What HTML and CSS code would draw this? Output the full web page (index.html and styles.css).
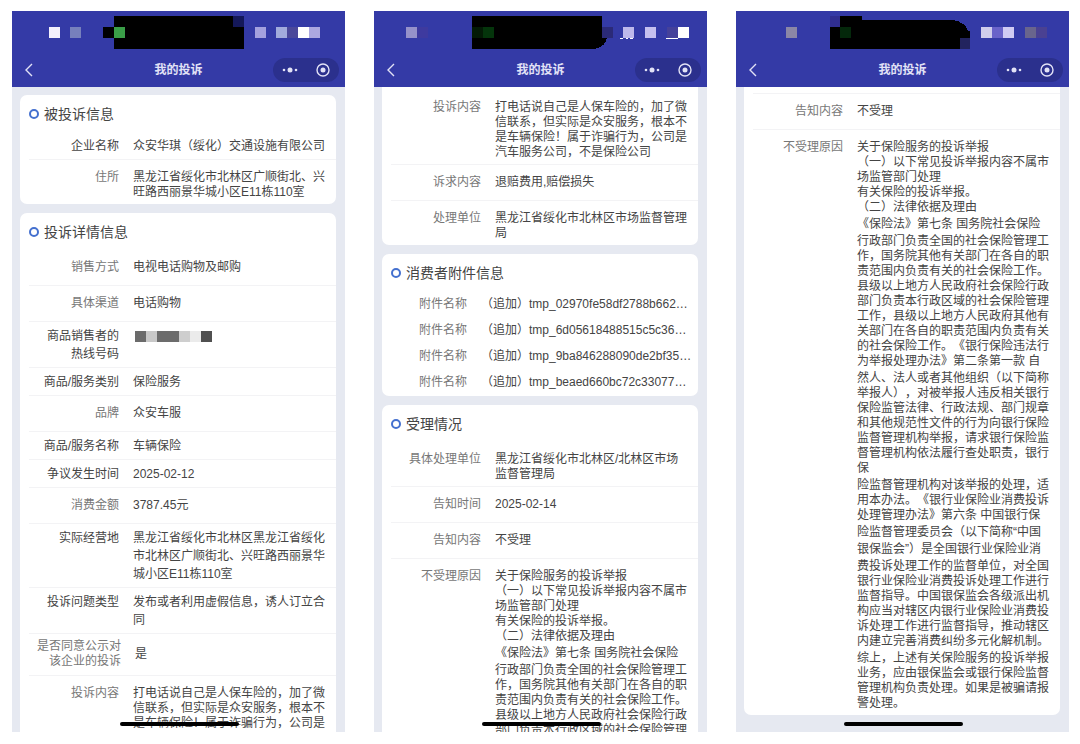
FILE: index.html
```html
<!DOCTYPE html>
<html lang="zh-CN">
<head>
    <meta charset="UTF-8">
    <meta name="viewport" content="width=device-width, initial-scale=1.0">
    <title>我的投诉</title>
    <link rel="stylesheet" href="styles.css">
</head>
<body>
    <!-- Screen 1 -->
    <section class="phone">
        <header class="top-bar">
            <svg class="status" viewBox="0 0 333 38" shape-rendering="crispEdges" aria-hidden="true">
                <rect x="37" y="16" width="11" height="11" fill="#f3f0fc"/>
                <rect x="58" y="16" width="11" height="11" fill="#7780bc"/>
                <rect x="91" y="16" width="11" height="11" fill="#000"/>
                <rect x="102" y="5" width="130" height="33" fill="#000"/>
                <rect x="221" y="5" width="11" height="11" fill="#14185a"/>
                <rect x="102" y="16" width="11" height="11" fill="#3a9e48"/>
                <rect x="243" y="16" width="11" height="11" fill="#a4a1de"/>
                <rect x="264" y="16" width="11" height="11" fill="#a2abdc"/>
                <rect x="275" y="16" width="11" height="11" fill="#4b489a"/>
                <rect x="286" y="16" width="11" height="11" fill="#fff"/>
                <rect x="297" y="16" width="11" height="11" fill="#aca8e0"/>
            </svg>
            <div class="nav">
                <button class="back" type="button" aria-label="返回">
                    <svg viewBox="0 0 10 14"><path d="M8 1 2 7l6 6"/></svg>
                </button>
                <h1>我的投诉</h1>
                <div class="capsule">
                    <button type="button" aria-label="更多">
                        <svg viewBox="0 0 16 14"><circle cx="2" cy="7" r="1.3"/><circle cx="8" cy="7" r="2.5"/><circle cx="14" cy="7" r="1.3"/></svg>
                    </button>
                    <button type="button" aria-label="关闭">
                        <svg viewBox="0 0 14 14"><circle class="ring" cx="7" cy="7" r="6"/><circle cx="7" cy="7" r="2.5"/></svg>
                    </button>
                </div>
            </div>
        </header>
        <main class="content">
            <article class="card">
                <h2>被投诉信息</h2>
                <dl>
                    <div class="row compact"><dt>企业名称</dt><dd>众安华琪（绥化）交通设施有限公司</dd></div>
                    <div class="row"><dt>住所</dt><dd>黑龙江省绥化市北林区广顺街北、兴旺路西丽景华城小区E11栋110室</dd></div>
                </dl>
            </article>
            <article class="card">
                <h2>投诉详情信息</h2>
                <dl>
                    <div class="row"><dt>销售方式</dt><dd>电视电话购物及邮购</dd></div>
                    <div class="row"><dt>具体渠道</dt><dd>电话购物</dd></div>
                    <div class="row compact">
                        <dt>商品销售者的<br>热线号码</dt>
                        <dd>
                            <svg class="masked" viewBox="0 0 77 11" shape-rendering="crispEdges" aria-hidden="true">
                                <rect width="11" height="11" fill="#6b6b6b"/>
                                <rect x="11" width="11" height="11" fill="#c8c8c8"/>
                                <rect x="22" width="22" height="11" fill="#6c6c6c"/>
                                <rect x="44" width="11" height="11" fill="#cecece"/>
                                <rect x="55" width="11" height="11" fill="#ebebeb"/>
                                <rect x="66" width="11" height="11" fill="#505050"/>
                            </svg>
                        </dd>
                    </div>
                    <div class="row compact"><dt>商品/服务类别</dt><dd>保险服务</dd></div>
                    <div class="row"><dt>品牌</dt><dd>众安车服</dd></div>
                    <div class="row compact"><dt>商品/服务名称</dt><dd>车辆保险</dd></div>
                    <div class="row compact"><dt>争议发生时间</dt><dd>2025-02-12</dd></div>
                    <div class="row"><dt>消费金额</dt><dd>3787.45元</dd></div>
                    <div class="row compact"><dt>实际经营地</dt><dd>黑龙江省绥化市北林区黑龙江省绥化市北林区广顺街北、兴旺路西丽景华城小区E11栋110室</dd></div>
                    <div class="row compact"><dt>投诉问题类型</dt><dd>发布或者利用虚假信息，诱人订立合同</dd></div>
                    <div class="row consent"><dt>是否同意公示对该企业的投诉</dt><dd>是</dd></div>
                    <div class="row"><dt>投诉内容</dt><dd>打电话说自己是人保车险的，加了微信联系，但实际是众安服务，根本不是车辆保险！属于诈骗行为，公司是</dd></div>
                    <div class="row"></div>
                </dl>
            </article>
        </main>
        <div class="home-bar"></div>
    </section>

    <!-- Screen 2 -->
    <section class="phone">
        <header class="top-bar">
            <svg class="status" viewBox="0 0 333 38" shape-rendering="crispEdges" aria-hidden="true">
                <rect x="32" y="16" width="11" height="11" fill="#9692ca"/>
                <rect x="43" y="16" width="11" height="11" fill="#3e3a9f"/>
                <path d="M98 5h130v22h5q-3 11-16 11H98z" fill="#000"/>
                <rect x="98" y="16" width="11" height="11" fill="#031a05"/>
                <rect x="109" y="16" width="11" height="11" fill="#04350b"/>
                <rect x="228" y="16" width="11" height="11" fill="#2b2a78"/>
                <rect x="249" y="16" width="11" height="11" fill="#beb9eb"/>
                <path d="M246 27h3v1h-3zM252 27h2v1h-2zM256 27h3v1h-3z" fill="#fff"/>
                <rect x="271" y="16" width="11" height="11" fill="#c5c0ef"/>
                <rect x="293" y="16" width="11" height="11" fill="#45419a"/>
                <rect x="304" y="16" width="11" height="11" fill="#fff"/>
                <rect x="292" y="27" width="12" height="1" fill="#fff"/>
            </svg>
            <div class="nav">
                <button class="back" type="button" aria-label="返回">
                    <svg viewBox="0 0 10 14"><path d="M8 1 2 7l6 6"/></svg>
                </button>
                <h1>我的投诉</h1>
                <div class="capsule">
                    <button type="button" aria-label="更多">
                        <svg viewBox="0 0 16 14"><circle cx="2" cy="7" r="1.3"/><circle cx="8" cy="7" r="2.5"/><circle cx="14" cy="7" r="1.3"/></svg>
                    </button>
                    <button type="button" aria-label="关闭">
                        <svg viewBox="0 0 14 14"><circle class="ring" cx="7" cy="7" r="6"/><circle cx="7" cy="7" r="2.5"/></svg>
                    </button>
                </div>
            </div>
        </header>
        <main class="content scrolled">
            <article class="card cut">
                <dl>
                    <div class="row"><dt>投诉内容</dt><dd>打电话说自己是人保车险的，加了微信联系，但实际是众安服务，根本不是车辆保险！属于诈骗行为，公司是汽车服务公司，不是保险公司</dd></div>
                    <div class="row"><dt>诉求内容</dt><dd>退赔费用,赔偿损失</dd></div>
                    <div class="row"><dt>处理单位</dt><dd>黑龙江省绥化市北林区市场监督管理局</dd></div>
                </dl>
            </article>
            <article class="card">
                <h2>消费者附件信息</h2>
                <dl class="files">
                    <div class="file"><dt>附件名称</dt><dd>（追加）tmp_02970fe58df2788b662…</dd></div>
                    <div class="file"><dt>附件名称</dt><dd>（追加）tmp_6d05618488515c5c36…</dd></div>
                    <div class="file"><dt>附件名称</dt><dd>（追加）tmp_9ba846288090de2bf35…</dd></div>
                    <div class="file"><dt>附件名称</dt><dd>（追加）tmp_beaed660bc72c33077…</dd></div>
                </dl>
            </article>
            <article class="card">
                <h2>受理情况</h2>
                <dl>
                    <div class="row"><dt>具体处理单位</dt><dd>黑龙江省绥化市北林区/北林区市场监督管理局</dd></div>
                    <div class="row"><dt>告知时间</dt><dd>2025-02-14</dd></div>
                    <div class="row"><dt>告知内容</dt><dd>不受理</dd></div>
                    <div class="row">
                        <dt>不受理原因</dt>
                        <dd>
                            <p>关于保险服务的投诉举报<br>（一）以下常见投诉举报内容不属市场监管部门处理<br>有关保险的投诉举报。<br>（二）法律依据及理由</p>
                            <p>《保险法》第七条 国务院社会保险</p>
                            <p>行政部门负责全国的社会保险管理工作，国务院其他有关部门在各自的职责范围内负责有关的社会保险工作。县级以上地方人民政府社会保险行政部门负责本行政区域的社会保险管理</p>
                        </dd>
                    </div>
                </dl>
            </article>
        </main>
        <div class="home-bar"></div>
    </section>

    <!-- Screen 3 -->
    <section class="phone">
        <header class="top-bar">
            <svg class="status" viewBox="0 0 333 38" shape-rendering="crispEdges" aria-hidden="true">
                <rect x="50" y="16" width="11" height="11" fill="#8b87a6"/>
                <rect x="94" y="5" width="10" height="11" fill="#302e90"/>
                <path d="M104 5h22v4h91q12 2 15 11l2 0v18H94V16h10z" fill="#000"/>
                <rect x="104" y="16" width="11" height="11" fill="#04280b"/>
                <rect x="224" y="27" width="10" height="11" fill="#22235e"/>
                <rect x="245" y="16" width="11" height="11" fill="#d0cdeb"/>
                <rect x="256" y="16" width="11" height="11" fill="#6a63c9"/>
                <rect x="267" y="16" width="11" height="11" fill="#d0cbf3"/>
                <rect x="289" y="16" width="11" height="11" fill="#69658d"/>
                <rect x="300" y="16" width="11" height="11" fill="#4a4192"/>
            </svg>
            <div class="nav">
                <button class="back" type="button" aria-label="返回">
                    <svg viewBox="0 0 10 14"><path d="M8 1 2 7l6 6"/></svg>
                </button>
                <h1>我的投诉</h1>
                <div class="capsule">
                    <button type="button" aria-label="更多">
                        <svg viewBox="0 0 16 14"><circle cx="2" cy="7" r="1.3"/><circle cx="8" cy="7" r="2.5"/><circle cx="14" cy="7" r="1.3"/></svg>
                    </button>
                    <button type="button" aria-label="关闭">
                        <svg viewBox="0 0 14 14"><circle class="ring" cx="7" cy="7" r="6"/><circle cx="7" cy="7" r="2.5"/></svg>
                    </button>
                </div>
            </div>
        </header>
        <main class="content scrolled">
            <article class="card cut">
                <div class="row-rest"></div>
                <dl>
                    <div class="row"><dt>告知内容</dt><dd>不受理</dd></div>
                    <div class="row">
                        <dt>不受理原因</dt>
                        <dd>
                            <p>关于保险服务的投诉举报<br>（一）以下常见投诉举报内容不属市场监管部门处理<br>有关保险的投诉举报。<br>（二）法律依据及理由</p>
                            <p>《保险法》第七条 国务院社会保险</p>
                            <p>行政部门负责全国的社会保险管理工作，国务院其他有关部门在各自的职责范围内负责有关的社会保险工作。县级以上地方人民政府社会保险行政部门负责本行政区域的社会保险管理工作，县级以上地方人民政府其他有关部门在各自的职责范围内负责有关的社会保险工作。《银行保险违法行为举报处理办法》第二条第一款 自</p>
                            <p>然人、法人或者其他组织（以下简称举报人），对被举报人违反相关银行保险监管法律、行政法规、部门规章和其他规范性文件的行为向银行保险监督管理机构举报，请求银行保险监督管理机构依法履行查处职责，银行保</p>
                            <p>险监督管理机构对该举报的处理，适用本办法。《银行业保险业消费投诉处理管理办法》第六条 中国银行保</p>
                            <p>险监督管理委员会（以下简称“中国</p>
                            <p>银保监会”）是全国银行业保险业消</p>
                            <p>费投诉处理工作的监督单位，对全国银行业保险业消费投诉处理工作进行监督指导。中国银保监会各级派出机构应当对辖区内银行业保险业消费投诉处理工作进行监督指导，推动辖区内建立完善消费纠纷多元化解机制。</p>
                            <p>综上，上述有关保险服务的投诉举报业务，应由银保监会或银行保险监督管理机构负责处理。如果是被骗请报警处理。</p>
                        </dd>
                    </div>
                </dl>
            </article>
        </main>
        <div class="home-bar"></div>
    </section>
</body>
</html>
```

FILE: styles.css
```css
* {
    margin: 0;
    padding: 0;
    box-sizing: border-box;
}

body {
    font-family: "Liberation Sans", "Noto Sans CJK SC", sans-serif;
    font-size: 12px;
    line-height: 15px;
    color: #444;
    background: #fff;
    height: 100vh;
    padding: 11px 11px 12px 12px;
    display: grid;
    grid-template-columns: repeat(3, minmax(0, 1fr));
    gap: 29px;
    text-spacing-trim: space-all;
}

.phone {
    position: relative;
    min-height: 0;
    overflow: hidden;
    background: #e6e9f1;
}

/* Header */
.top-bar {
    background: #343aa6;
    padding-bottom: 5px;
}

.status {
    display: block;
    width: 100%;
    margin-bottom: 9px;
}

.nav {
    display: grid;
    grid-template-columns: 1fr auto 1fr;
    align-items: center;
    height: 24px;
    padding: 0 6px 0 12px;
    color: #e2e2f6;
}

.nav h1 {
    font-size: 12px;
    line-height: 18px;
    font-weight: 700;
    padding-right: 6px;
}

.nav button {
    display: flex;
    align-items: center;
    border: none;
    background: none;
    color: inherit;
    cursor: pointer;
}

.nav svg {
    height: 14px;
    fill: currentColor;
}

.back path,
.nav .ring {
    fill: none;
    stroke: currentColor;
    stroke-width: 1.4;
}

.capsule {
    justify-self: end;
    display: flex;
    align-items: center;
    justify-content: space-between;
    width: 66px;
    height: 24px;
    padding: 0 9px;
    border-radius: 12px;
    background: #2b308d;
}

/* Cards */
.content {
    display: flex;
    flex-direction: column;
    gap: 9px;
    padding: 8px 9px 0 8px;
}

.content.scrolled {
    padding-top: 0;
}

.card {
    background: #fff;
    border-radius: 7px;
    padding-left: 9px;
}

.card.cut {
    border-radius: 0 0 7px 7px;
    padding-top: 3px;
}

.card h2 {
    display: flex;
    align-items: center;
    gap: 5px;
    height: 37px;
    padding-top: 1px;
    font-size: 14px;
    font-weight: 400;
}

.card h2::before {
    content: "";
    box-sizing: border-box;
    width: 10px;
    height: 10px;
    border: 2px solid #4470cf;
    border-radius: 50%;
}

/* Rows */
.row {
    display: grid;
    grid-template-columns: 90px 1fr;
    column-gap: 14px;
    min-height: 36px;
    padding: 10px 8px 4px 0;
    border-bottom: 1px solid #f3f3f5;
}

.row:last-child {
    border-bottom: none;
}

.row dt {
    text-align: right;
    color: #777;
}

.row.compact {
    min-height: 28px;
    padding: 5px 8px 4px 0;
    line-height: 18px;
}

.row.compact dt {
    color: #444;
}

.row.consent {
    grid-template-columns: 92px 1fr;
    align-items: center;
    padding: 5px 8px 6px 0;
}

.row-rest {
    height: 4px;
    border-bottom: 1px solid #f3f3f5;
}

.row p + p {
    margin-top: 2px;
}

.masked {
    display: block;
    width: 77px;
    margin: 4px 0 0 2px;
}

.files {
    padding-bottom: 1px;
}

.file {
    display: grid;
    grid-template-columns: 76px 1fr;
    column-gap: 14px;
    line-height: 26px;
    white-space: nowrap;
}

.file dt {
    text-align: right;
    color: #777;
}

.home-bar {
    position: absolute;
    left: 50%;
    bottom: 6px;
    width: 119px;
    height: 4px;
    margin-left: -59px;
    border-radius: 2px;
    background: #000;
}
```
